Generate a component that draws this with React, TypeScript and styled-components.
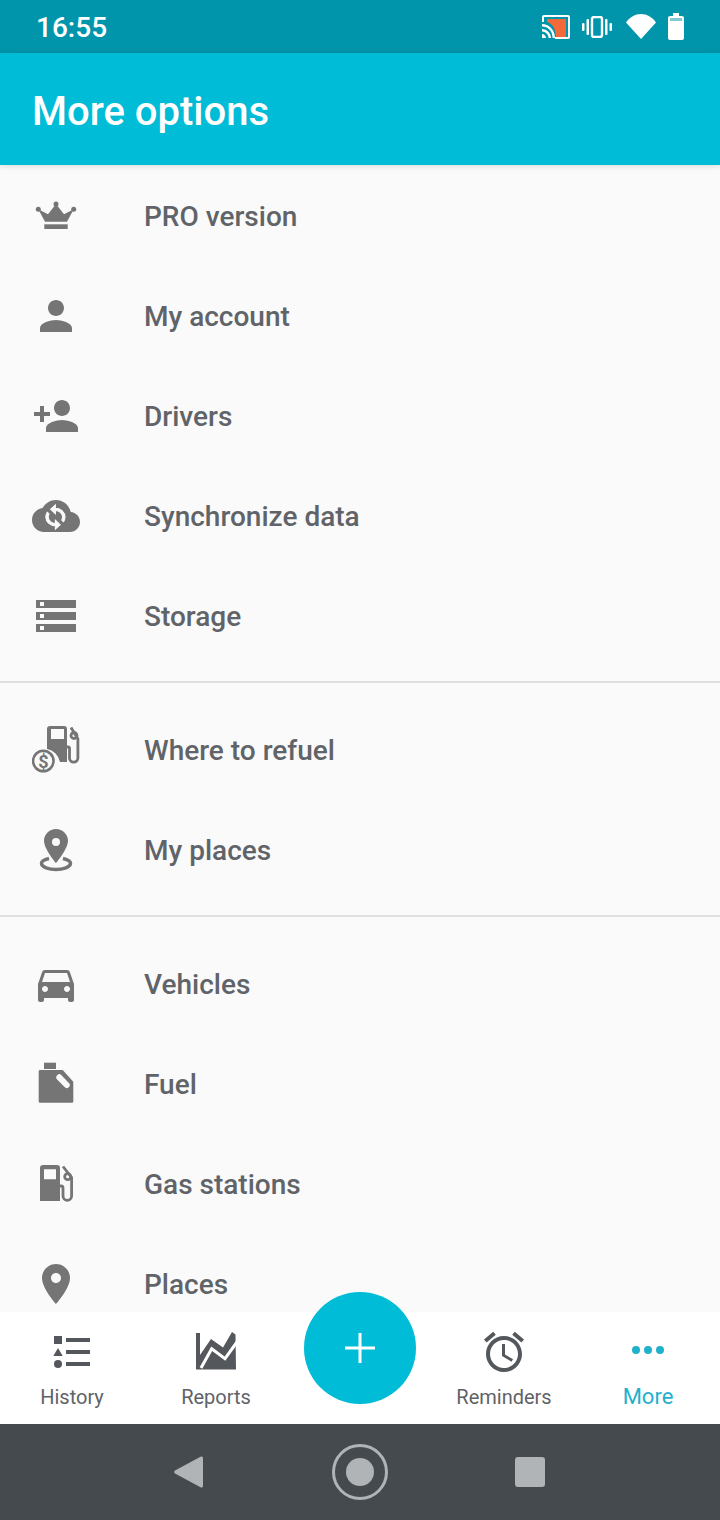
import React from "react";
import styled, { createGlobalStyle } from "styled-components";

const GlobalStyle = createGlobalStyle`
  html, body {
    margin: 0;
    padding: 0;
    background: #fafafa;
  }
  * {
    box-sizing: border-box;
  }
`;

const Screen = styled.div`
  position: relative;
  display: flex;
  flex-direction: column;
  width: 720px;
  height: 1520px;
  overflow: hidden;
  background: #fafafa;
  font-family: Roboto, "Noto Sans", sans-serif;
`;

const StatusBar = styled.div`
  display: flex;
  flex: 0 0 53px;
  align-items: center;
  justify-content: space-between;
  padding: 0 36px 0 36px;
  background: #0095ab;
  color: #fff;
`;

const Clock = styled.span`
  padding-top: 2px;
  font-size: 28px;
  font-weight: 500;
`;

const StatusIcons = styled.div`
  display: flex;
  align-items: center;
`;

const AppBar = styled.header`
  position: relative;
  z-index: 1;
  display: flex;
  flex: 0 0 112px;
  align-items: center;
  padding: 4px 32px 0;
  background: #00bcd6;
  box-shadow: 0 1px 6px rgba(0, 0, 0, 0.14);
`;

const Title = styled.h1`
  margin: 0;
  color: #fff;
  font-size: 40px;
  font-weight: 500;
`;

const Content = styled.main`
  flex: 1;
  min-height: 0;
  overflow: hidden;
  padding-top: 1px;
`;

const Section = styled.section`
  padding: 0 0 15px;
  margin-bottom: 17px;
  border-bottom: 2px solid #e0e0e0;

  &:last-child {
    border-bottom: 0;
    margin-bottom: 0;
  }
`;

const Row = styled.div`
  display: flex;
  align-items: center;
  height: 100px;
  padding-left: 32px;
`;

const RowIcon = styled.svg`
  flex: 0 0 48px;
  width: 48px;
  height: 48px;
  margin-right: 64px;
  fill: #757575;
`;

const RowLabel = styled.span`
  color: #606468;
  font-size: 28px;
  font-weight: 500;
`;

const BottomNav = styled.nav`
  display: grid;
  flex: 0 0 112px;
  grid-template-columns: repeat(5, 144px);
  background: #fff;
`;

const Tab = styled.div`
  display: flex;
  flex-direction: column;
  align-items: center;
  padding-top: 16px;
`;

const TabIcon = styled.svg<{ $active?: boolean }>`
  width: 48px;
  height: 48px;
  fill: ${(props) => (props.$active ? "#1fb1cc" : "#54585c")};
`;

const TabLabel = styled.span<{ $active?: boolean }>`
  margin-top: 9px;
  color: ${(props) => (props.$active ? "#1fb1cc" : "#5f6367")};
  font-size: ${(props) => (props.$active ? "22px" : "20px")};
  line-height: 24px;
`;

const Fab = styled.button`
  position: absolute;
  left: 304px;
  top: 1292px;
  display: flex;
  align-items: center;
  justify-content: center;
  width: 112px;
  height: 112px;
  padding: 0;
  border: 0;
  border-radius: 50%;
  background: #00bcd6;
`;

const NavBar = styled.div`
  display: flex;
  flex: 0 0 96px;
  align-items: center;
  background: #454a4f;
`;

const NavBack = styled.svg`
  width: 30px;
  height: 34px;
  margin-left: 173px;
  fill: #b1b4b6;
`;

const NavHome = styled.div`
  display: flex;
  align-items: center;
  justify-content: center;
  width: 56px;
  height: 56px;
  margin-left: 129px;
  border: 3px solid #b1b4b6;
  border-radius: 50%;

  &::after {
    content: "";
    width: 28px;
    height: 28px;
    border-radius: 50%;
    background: #b1b4b6;
  }
`;

const NavRecent = styled.div`
  width: 30px;
  height: 30px;
  margin-left: 127px;
  border-radius: 3px;
  background: #b1b4b6;
`;

const CastIcon = () => (
  <svg width="30" height="26" viewBox="0 0 30 26" style={{ marginRight: 11 }}>
    <path d="M3 1h24a2 2 0 0 1 2 2v20a2 2 0 0 1-2 2H14v-2h13V3H3v5H1V3a2 2 0 0 1 2-2z" fill="#fff" />
    <path d="M6 5h19v18H15C14 14 12 10 6 8z" fill="#f4693a" />
    <path d="M1 10c7 0 13 6 13 14h-2.4C11.600 17 7 12.400 1 12.400zM1 15c4.800 0 9 4 9 9H7.600c0-3.600-3-6.600-6.600-6.600zM1 20c2.200 0 4 1.800 4 4H1z" fill="#fff" />
  </svg>
);

const VibrateIcon = () => (
  <svg width="30" height="22" viewBox="0 0 30 22" style={{ marginRight: 14 }} fill="#fff">
    <rect x="0" y="7" width="2.500" height="8" rx="1" />
    <rect x="4.500" y="3" width="2.500" height="16" rx="1" />
    <rect x="23" y="3" width="2.500" height="16" rx="1" />
    <rect x="27.500" y="7" width="2.500" height="8" rx="1" />
    <rect x="10" y="1" width="10" height="20" rx="2" fill="none" stroke="#fff" strokeWidth="2.400" />
  </svg>
);

const WifiIcon = () => (
  <svg width="30" height="25" viewBox="0 0 30 25" style={{ marginRight: 12 }}>
    <path d="M15 25L0 8.500C4 3 9 0 15 0s11 3 15 8.500z" fill="#fff" />
  </svg>
);

const BatteryIcon = () => (
  <svg width="16" height="27" viewBox="0 0 16 27">
    <path d="M5 0h6v3h3a2 2 0 0 1 2 2v20a2 2 0 0 1-2 2H2a2 2 0 0 1-2-2V5a2 2 0 0 1 2-2h3z" fill="#fff" />
    <rect x="2" y="5" width="12" height="3" fill="#7fcad5" />
  </svg>
);

const CrownIcon = () => (
  <RowIcon viewBox="0 0 48 48">
    <path d="M13 29.700L6.300 17.300l9.700 5L24 12l8 10.300 9.700-5L35 29.700z" />
    <circle cx="6.300" cy="17.300" r="2.500" />
    <circle cx="24" cy="12" r="2.500" />
    <circle cx="41.700" cy="17.300" r="2.500" />
    <rect x="12.300" y="32.300" width="23.400" height="4.700" />
  </RowIcon>
);

const PersonIcon = () => (
  <RowIcon viewBox="0 0 24 24">
    <path d="M12 12c2.210 0 4-1.790 4-4s-1.790-4-4-4-4 1.790-4 4 1.790 4 4 4zm0 2c-2.670 0-8 1.340-8 4v2h16v-2c0-2.660-5.330-4-8-4z" />
  </RowIcon>
);

const PersonAddIcon = () => (
  <RowIcon viewBox="0 0 24 24">
    <path d="M15 12c2.210 0 4-1.790 4-4s-1.790-4-4-4-4 1.790-4 4 1.790 4 4 4zm-9-2V7H4v3H1v2h3v3h2v-3h3v-2H6zm9 4c-2.670 0-8 1.340-8 4v2h16v-2c0-2.660-5.330-4-8-4z" />
  </RowIcon>
);

const CloudSyncIcon = () => (
  <RowIcon viewBox="0 0 24 24">
    <path d="M19.350 10.040C18.670 6.590 15.640 4 12 4 9.110 4 6.600 5.640 5.350 8.040 2.340 8.360 0 10.910 0 14c0 3.310 2.690 6 6 6h13c2.760 0 5-2.240 5-5 0-2.640-2.050-4.780-4.650-4.960z" />
    <path
      transform="translate(11.700 12.500) scale(0.6 0.55) translate(-12 -12)"
      fill="#fafafa"
      stroke="#fafafa"
      strokeWidth="0.9"
      d="M12 4V1L8 5l4 4V6c3.310 0 6 2.690 6 6 0 1.010-.25 1.970-.7 2.800l1.460 1.460C19.540 15.030 20 13.570 20 12c0-4.420-3.580-8-8-8zm0 14c-3.310 0-6-2.690-6-6 0-1.010.25-1.970.7-2.800L5.240 7.740C4.460 8.970 4 10.430 4 12c0 4.420 3.580 8 8 8v3l4-4-4-4v3z"
    />
  </RowIcon>
);

const StorageIcon = () => (
  <RowIcon viewBox="0 0 24 24">
    <path d="M2 20h20v-4H2v4zm2-3h2v2H4v-2zM2 4v4h20V4H2zm4 3H4V5h2v2zm-4 7h20v-4H2v4zm2-3h2v2H4v-2z" />
  </RowIcon>
);

const RefuelIcon = () => (
  <RowIcon viewBox="0 0 48 48">
    <path
      fillRule="evenodd"
      d="M18 0h14a3 3 0 0 1 3 3v33h-7a16 16 0 0 0-13-13V3a3 3 0 0 1 3-3zm1 3v10h13V3z"
    />
    <path d="M34 21h2a1.500 1.500 0 0 1 1.500 1.500V32a4.200 4.200 0 0 0 8.400 0V13L39 1.500" fill="none" stroke="#757575" strokeWidth="2.800" />
    <circle cx="42" cy="9.500" r="3" fill="none" stroke="#757575" strokeWidth="2.800" />
    <circle cx="11.300" cy="35" r="10.200" fill="none" stroke="#757575" strokeWidth="2.600" />
    <text x="11.300" y="41.500" textAnchor="middle" fontFamily="Roboto, sans-serif" fontSize="18" fontWeight="700" fill="#757575">
      $
    </text>
  </RowIcon>
);

const MyPlacesIcon = () => (
  <RowIcon viewBox="0 0 48 48">
    <path d="M17 32.500C12.500 33.500 9.500 35 9.500 37.500 9.500 41 17 43.500 24 43.500s14.500-2.500 14.500-6c0-2.500-3-4-7.500-5" fill="none" stroke="#757575" strokeWidth="3.500" />
    <path
      fillRule="evenodd"
      d="M24 3c6.600 0 12 5.200 12 11.700C36 23 24 37 24 37S12 23 12 14.700C12 8.200 17.400 3 24 3zm0 9a4 4 0 1 0 0 8 4 4 0 0 0 0-8z"
    />
  </RowIcon>
);

const CarIcon = () => (
  <RowIcon viewBox="0 0 24 24">
    <path d="M18.920 6.010C18.720 5.420 18.160 5 17.500 5h-11c-.66 0-1.210.42-1.420 1.010L3 12v8c0 .55.45 1 1 1h1c.55 0 1-.45 1-1v-1h12v1c0 .55.45 1 1 1h1c.55 0 1-.45 1-1v-8l-2.080-5.990zM6.500 16c-.83 0-1.500-.67-1.500-1.500S5.670 13 6.500 13s1.500.67 1.500 1.500S7.330 16 6.500 16zm11 0c-.83 0-1.500-.67-1.500-1.500s.67-1.500 1.500-1.500 1.500.67 1.500 1.500-.67 1.500-1.500 1.500zM5 11l1.500-4.500h11L19 11H5z" />
  </RowIcon>
);

const FuelCanIcon = () => (
  <RowIcon viewBox="0 0 48 48">
    <rect x="12" y="2.700" width="12" height="6.300" />
    <path d="M8 10h22.700l10.600 11.700V41.500a1.200 1.200 0 0 1-1.200 1.200H8a1.300 1.300 0 0 1-1.300-1.200V11.300A1.300 1.300 0 0 1 8 10z" />
    <path d="M27.300 17.300L34.700 25" fill="none" stroke="#fafafa" strokeWidth="6" strokeLinecap="round" />
  </RowIcon>
);

const GasPumpIcon = () => (
  <RowIcon viewBox="0 0 48 48">
    <path fillRule="evenodd" d="M11 5h14a3 3 0 0 1 3 3v33H8V8a3 3 0 0 1 3-3zm1 4.300v10h12v-10z" />
    <path d="M27 26h2a2 2 0 0 1 2 2V36a4.300 4.300 0 0 0 8.600 0V17.500L31 6.500" fill="none" stroke="#757575" strokeWidth="2.800" />
    <circle cx="35.700" cy="16.700" r="3" fill="none" stroke="#757575" strokeWidth="2.800" />
  </RowIcon>
);

const PlaceIcon = () => (
  <RowIcon viewBox="0 0 24 24">
    <path d="M12 2C8.130 2 5 5.130 5 9c0 5.250 7 13 7 13s7-7.750 7-13c0-3.870-3.130-7-7-7zm0 9.500c-1.380 0-2.500-1.120-2.500-2.500s1.120-2.500 2.500-2.500 2.500 1.120 2.500 2.500-1.120 2.500-2.500 2.500z" />
  </RowIcon>
);

const sections = [
  [
    { label: "PRO version", icon: <CrownIcon /> },
    { label: "My account", icon: <PersonIcon /> },
    { label: "Drivers", icon: <PersonAddIcon /> },
    { label: "Synchronize data", icon: <CloudSyncIcon /> },
    { label: "Storage", icon: <StorageIcon /> },
  ],
  [
    { label: "Where to refuel", icon: <RefuelIcon /> },
    { label: "My places", icon: <MyPlacesIcon /> },
  ],
  [
    { label: "Vehicles", icon: <CarIcon /> },
    { label: "Fuel", icon: <FuelCanIcon /> },
    { label: "Gas stations", icon: <GasPumpIcon /> },
    { label: "Places", icon: <PlaceIcon /> },
  ],
];

const App = () => {
  return (
    <Screen>
      <GlobalStyle />
      <StatusBar>
        <Clock>16:55</Clock>
        <StatusIcons>
          <CastIcon />
          <VibrateIcon />
          <WifiIcon />
          <BatteryIcon />
        </StatusIcons>
      </StatusBar>
      <AppBar>
        <Title>More options</Title>
      </AppBar>
      <Content>
        {sections.map((rows, idx) => (
          <Section key={idx}>
            {rows.map((row) => (
              <Row key={row.label}>
                {row.icon}
                <RowLabel>{row.label}</RowLabel>
              </Row>
            ))}
          </Section>
        ))}
      </Content>
      <BottomNav>
        <Tab>
          <TabIcon viewBox="0 0 48 48">
            <rect x="6" y="8" width="8" height="8" />
            <path d="M10 20l4.700 8H5.300z" />
            <circle cx="10" cy="36" r="4" />
            <rect x="18" y="10" width="24" height="4" />
            <rect x="18" y="22" width="24" height="4" />
            <rect x="18" y="34" width="24" height="4" />
          </TabIcon>
          <TabLabel>History</TabLabel>
        </Tab>
        <Tab>
          <TabIcon viewBox="0 0 48 48">
            <path d="M4 5h4v22l11-16 12 8.500L40 4l3.500 2.500L44 41.500H4z" />
            <path d="M9 40l10.700-19.300L33 30.700 45 14" fill="none" stroke="#fff" strokeWidth="3" />
          </TabIcon>
          <TabLabel>Reports</TabLabel>
        </Tab>
        <div />
        <Tab>
          <TabIcon viewBox="0 0 24 24">
            <path d="M22 5.720l-4.600-3.860-1.290 1.530 4.600 3.860L22 5.720zM7.880 3.390L6.600 1.860 2 5.710l1.290 1.530 4.590-3.850zM12.500 8H11v6l4.750 2.850.75-1.230-4-2.370V8zM12 4c-4.970 0-9 4.030-9 9s4.030 9 9 9 9-4.030 9-9-4.030-9-9-9zm0 16c-3.870 0-7-3.130-7-7s3.130-7 7-7 7 3.130 7 7-3.130 7-7 7z" />
          </TabIcon>
          <TabLabel>Reminders</TabLabel>
        </Tab>
        <Tab>
          <TabIcon $active viewBox="0 0 48 48">
            <circle cx="12" cy="22" r="4" />
            <circle cx="24" cy="22" r="4" />
            <circle cx="36" cy="22" r="4" />
          </TabIcon>
          <TabLabel $active>More</TabLabel>
        </Tab>
      </BottomNav>
      <Fab aria-label="Add">
        <svg width="30" height="30" viewBox="0 0 30 30">
          <path d="M13.500 0h3v13.500H30v3H16.500V30h-3V16.500H0v-3h13.500z" fill="#fff" />
        </svg>
      </Fab>
      <NavBar>
        <NavBack viewBox="0 0 30 34">
          <path d="M28 1.500L2 15.500a1.800 1.800 0 0 0 0 3l26 14a1.500 1.500 0 0 0 2-1.500V3a1.500 1.500 0 0 0-2-1.500z" />
        </NavBack>
        <NavHome />
        <NavRecent />
      </NavBar>
    </Screen>
  );
};

export default App;
